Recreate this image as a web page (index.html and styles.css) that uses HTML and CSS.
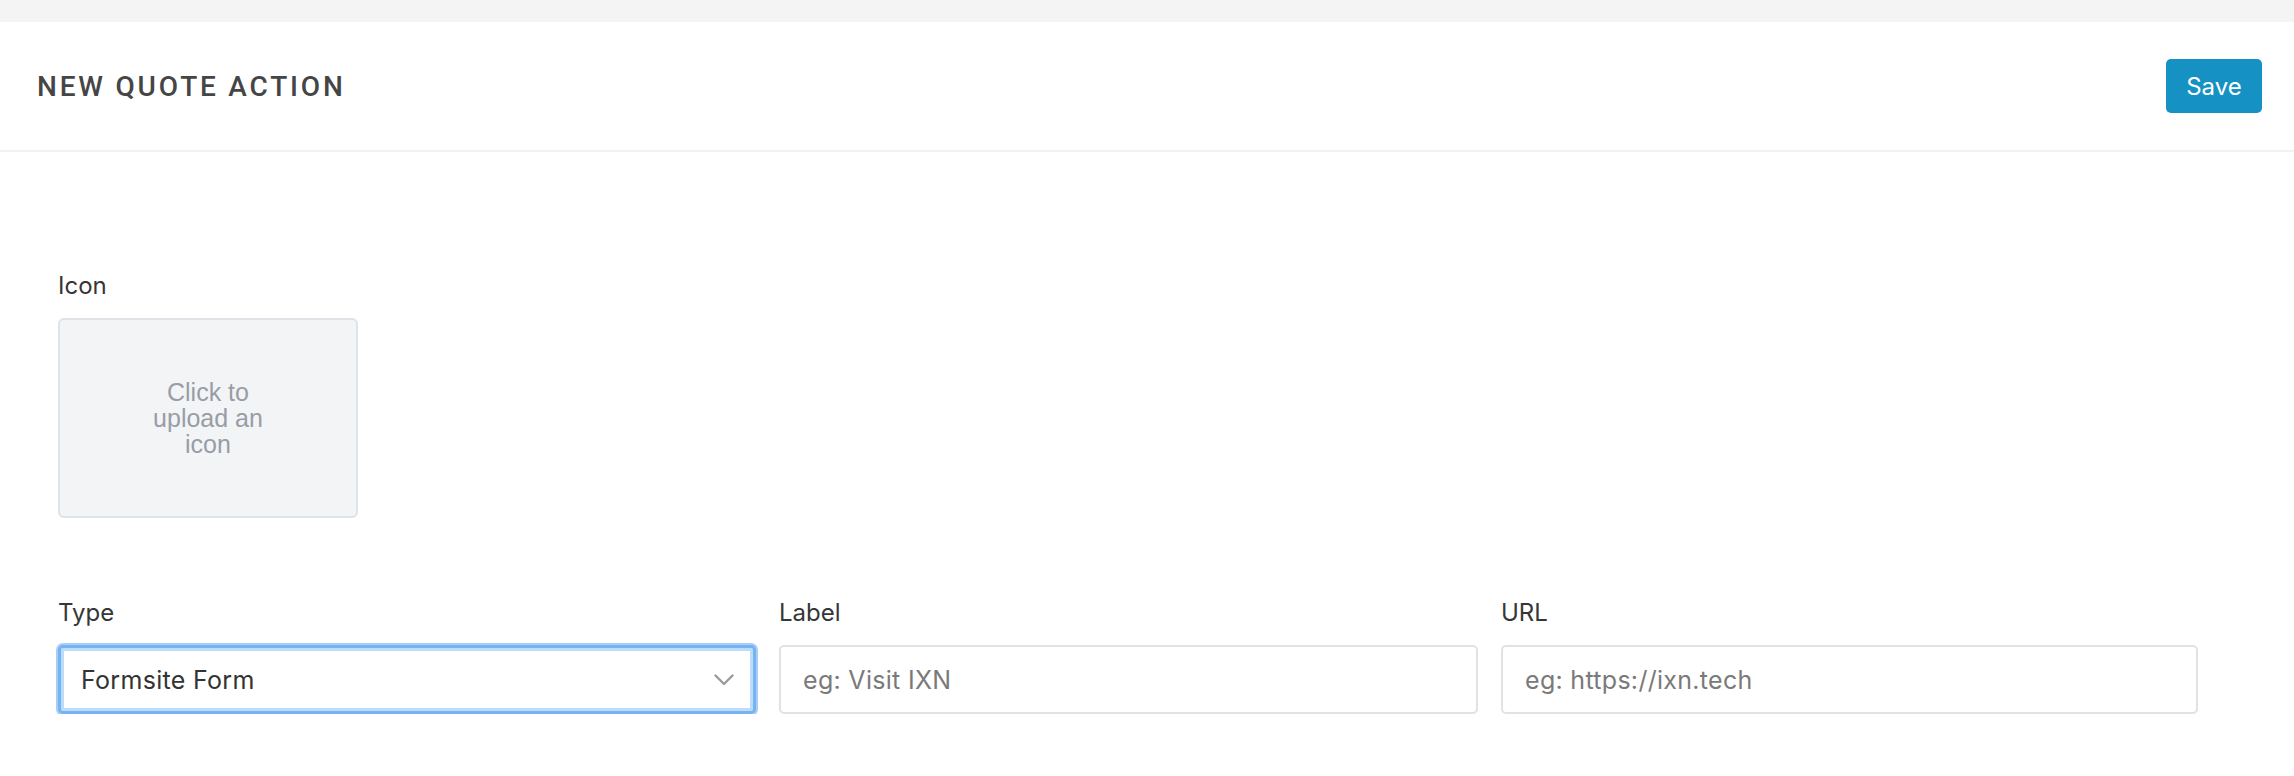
FILE: index.html
```html
<!DOCTYPE html>
<html lang="en">
<head>
<meta charset="utf-8">
<title>New Quote Action</title>
<link rel="stylesheet" href="styles.css">
</head>
<body>
<div class="topbar"></div>
<header class="header">
  <h1 class="title">NEW QUOTE ACTION</h1>
  <button class="save-btn" type="button">Save</button>
</header>
<main class="content">
  <div class="field icon-field">
    <label class="field-label">Icon</label>
    <div class="upload-box">
      <span class="upload-text">Click to upload an icon</span>
    </div>
  </div>
  <div class="fields-row">
    <div class="field">
      <label class="field-label">Type</label>
      <div class="select focused">
        <span class="select-value">Formsite Form</span>
        <svg class="chevron" width="20" height="12" viewBox="0 0 20 12" aria-hidden="true">
          <path d="M1.5 1.5 L10 10 L18.5 1.5" fill="none" stroke="#9a9a9a" stroke-width="2.4" stroke-linecap="round" stroke-linejoin="round"/>
        </svg>
      </div>
    </div>
    <div class="field">
      <label class="field-label">Label</label>
      <input class="input" type="text" placeholder="eg: Visit IXN">
    </div>
    <div class="field">
      <label class="field-label">URL</label>
      <input class="input" type="text" placeholder="eg: https://ixn.tech">
    </div>
  </div>
</main>
</body>
</html>
```

FILE: styles.css
```css
* {
  box-sizing: border-box;
}

html, body {
  margin: 0;
  padding: 0;
  background: #ffffff;
}

body {
  font-family: Inter, Roboto, "Liberation Sans", Arial, sans-serif;
  color: #333333;
}

.topbar {
  height: 22px;
  background: #f4f4f4;
}

.header {
  height: 130px;
  display: flex;
  align-items: center;
  justify-content: space-between;
  padding: 0 32px 0 37px;
  border-bottom: 2px solid #f2f2f2;
  background: #ffffff;
}

.title {
  margin: 0;
  font-family: Roboto, "Liberation Sans", Arial, sans-serif;
  font-size: 28px;
  font-weight: 500;
  letter-spacing: 2.8px;
  color: #454545;
}

.save-btn {
  width: 96px;
  height: 54px;
  border: none;
  border-radius: 5px;
  background: #1592c3;
  color: #ffffff;
  font-family: Inter, Roboto, "Liberation Sans", Arial, sans-serif;
  font-size: 24px;
  font-weight: 400;
  padding: 0;
  cursor: pointer;
}

.content {
  padding: 120px 58px 0 58px;
}

.field {
  display: flex;
  flex-direction: column;
}

.field-label {
  font-size: 24px;
  line-height: 28px;
  color: #363636;
  margin-bottom: 18px;
}

.upload-box {
  width: 300px;
  height: 200px;
  background: #f3f4f6;
  border: 2px solid #dfe2e6;
  border-radius: 6px;
  display: flex;
  align-items: center;
  justify-content: center;
}

.upload-text {
  width: 130px;
  text-align: center;
  font-family: "Liberation Sans", Arial, sans-serif;
  font-size: 25px;
  line-height: 26px;
  color: #989da6;
}

.fields-row {
  margin-top: 81px;
  display: grid;
  grid-template-columns: 698px 699px 697px;
  column-gap: 23px;
}

.select {
  height: 69px;
  display: flex;
  align-items: center;
  justify-content: space-between;
  padding: 0 19px 0 20px;
  border: 3px solid #76b3f3;
  border-radius: 5px;
  background: #ffffff;
  box-shadow: 0 0 0 2px #a8cef8, inset 0 0 0 3px #bcdcfb;
}

.select-value {
  font-size: 25px;
  letter-spacing: 0.3px;
  color: #333333;
}

.chevron {
  display: block;
}

.input {
  height: 69px;
  width: 100%;
  border: 2px solid #e2e2e2;
  border-radius: 5px;
  padding: 0 22px;
  font-family: Inter, Roboto, "Liberation Sans", Arial, sans-serif;
  font-size: 25px;
  letter-spacing: 0.3px;
  color: #333333;
  background: #ffffff;
  outline: none;
}

.input::placeholder {
  color: #7a7a7a;
  opacity: 1;
}
```
